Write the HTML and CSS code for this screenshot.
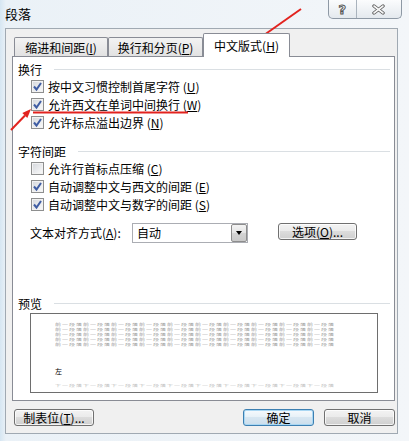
FILE: index.html
```html
<!DOCTYPE html>
<html lang="zh-CN">
<head>
  <meta charset="UTF-8" />
  <title>段落</title>
  <link rel="stylesheet" href="styles.css">
</head>
<body>

<div class="window">
  <div class="titlebar">
    <span class="title">段落</span>
    <div class="caption-btns">
      <span class="cap help">?</span>
      <span class="cap close">
        <svg width="13" height="11" viewBox="0 0 13 11">
          <path d="M2 2 L11 9 M11 2 L2 9" stroke="#5b5b5b" stroke-width="3.4" stroke-linecap="round" fill="none"/>
          <path d="M2 2 L11 9 M11 2 L2 9" stroke="#f7f7f7" stroke-width="1.6" stroke-linecap="round" fill="none"/>
        </svg>
      </span>
    </div>
  </div>

  <div class="client">
    <div class="tabs">
      <div class="tab t1">缩进和间距(<u>I</u>)</div>
      <div class="tab t2">换行和分页(<u>P</u>)</div>
      <div class="tab t3 active">中文版式(<u>H</u>)</div>
    </div>

    <div class="panel">
      <div class="group-title"><span>换行</span><i></i></div>
      <label class="check"><span class="cb"><svg width="11" height="11" viewBox="0 0 11 11"><path d="M2 5.5 L4.5 8.5 L9 2" stroke="#3f5da3" stroke-width="2" fill="none"/></svg></span>按中文习惯控制首尾字符 (<u>U</u>)</label>
      <label class="check"><span class="cb"><svg width="11" height="11" viewBox="0 0 11 11"><path d="M2 5.5 L4.5 8.5 L9 2" stroke="#3f5da3" stroke-width="2" fill="none"/></svg></span>允许西文在单词中间换行 (<u>W</u>)</label>
      <label class="check"><span class="cb"><svg width="11" height="11" viewBox="0 0 11 11"><path d="M2 5.5 L4.5 8.5 L9 2" stroke="#3f5da3" stroke-width="2" fill="none"/></svg></span>允许标点溢出边界 (<u>N</u>)</label>

      <div class="group-title chars"><span>字符间距</span><i></i></div>
      <label class="check"><span class="cb"></span>允许行首标点压缩 (<u>C</u>)</label>
      <label class="check"><span class="cb"><svg width="11" height="11" viewBox="0 0 11 11"><path d="M2 5.5 L4.5 8.5 L9 2" stroke="#3f5da3" stroke-width="2" fill="none"/></svg></span>自动调整中文与西文的间距 (<u>E</u>)</label>
      <label class="check"><span class="cb"><svg width="11" height="11" viewBox="0 0 11 11"><path d="M2 5.5 L4.5 8.5 L9 2" stroke="#3f5da3" stroke-width="2" fill="none"/></svg></span>自动调整中文与数字的间距 (<u>S</u>)</label>

      <div class="align-row">
        <span class="lbl">文本对齐方式(<u>A</u>):</span>
        <div class="select">
          <span class="val">自动</span>
          <span class="arrow"><b></b></span>
        </div>
        <span class="btn options">选项(<u>O</u>)...</span>
      </div>

      <div class="group-title preview-title"><span>预览</span><i></i></div>
      <div class="preview">
        <div class="pv-prev">前一段落前一段落前一段落前一段落前一段落前一段落前一段落前一段落前一段落前一段落<br>前一段落前一段落前一段落前一段落前一段落前一段落前一段落前一段落前一段落前一段落<br>前一段落前一段落前一段落前一段落前一段落前一段落前一段落前一段落前一段落前一段落<br>前一段落前一段落前一段落前一段落前一段落前一段落前一段落前一段落前一段落前一段落<br>前一段落前一段落前一段落前一段落前一段落前一段落前一段落前一段落前一段落前一段落</div>
        <div class="pv-cur">左</div>
        <div class="pv-next">下一段落下一段落下一段落下一段落下一段落下一段落下一段落下一段落下一段落下一段落</div>
      </div>
    </div>

    <div class="buttons">
      <span class="btn tabstop">制表位(<u>T</u>)...</span>
      <span class="btn ok">确定</span>
      <span class="btn cancel">取消</span>
    </div>
  </div>

  <!-- red annotation marks drawn over the dialog -->
  <svg class="marks" width="409" height="441" viewBox="0 0 409 441">
    <line x1="301" y1="9" x2="257" y2="40" stroke="#e2231f" stroke-width="2"/>
    <polygon points="250,45 260.5,42.5 255.9,35.9" fill="#e2231f"/>
    <line x1="11" y1="130" x2="25" y2="115.5" stroke="#e2231f" stroke-width="2"/>
    <polygon points="31,109 27.3,117.9 22.3,113.1" fill="#e2231f"/>
    <line x1="33" y1="112.5" x2="188" y2="112.5" stroke="#e2231f" stroke-width="2"/>
  </svg>
</div>

</body>
</html>
```

FILE: styles.css
```css
body {
  margin: 0;
  font-family: "Noto Sans CJK SC", "Noto Sans", sans-serif;
  font-size: 12px;
  color: #000;
}
u {
  text-decoration: underline;
}
.window {
  position: relative;
  width: 409px;
  height: 441px;
  overflow: hidden;
  background: linear-gradient(90deg, #d6e6f2 0, #eaf1f7 6px, #f3f6f9 100%);
}
.titlebar {
  height: 28px;
  display: flex;
  justify-content: space-between;
  align-items: flex-start;
}
.title {
  padding-left: 5px;
  line-height: 28px;
  font-size: 13px;
}
.caption-btns {
  display: flex;
  width: 74px;
  height: 19px;
  margin-right: 7px;
  box-sizing: border-box;
  border: 1px solid #8e99a5;
  border-top: 0;
  border-radius: 0 0 5px 5px;
  background: linear-gradient(#fbfcfd, #e4e9ee);
}
.cap {
  display: flex;
  align-items: center;
  justify-content: center;
  height: 18px;
}
.cap.help {
  width: 27px;
  border-right: 1px solid #a9b3bd;
  font: bold 13px "DejaVu Sans", sans-serif;
  color: #f7f7f7;
  -webkit-text-stroke: 1px #555;
}
.cap.close {
  width: 45px;
}
.client {
  margin-left: 5px;
  width: 393px;
  height: 406px;
  box-sizing: border-box;
  border: 1px solid #a0a9b2;
  background: #f0f0f0;
  padding: 4px 2px 0 6px;
}
.tabs {
  display: flex;
  align-items: flex-end;
  height: 23px;
  margin-left: 2px;
}
.tab {
  height: 19px;
  box-sizing: border-box;
  border: 1px solid #898c95;
  border-bottom: 0;
  border-radius: 2px 2px 0 0;
  background: linear-gradient(#f3f3f3, #e2e2e2);
  display: flex;
  align-items: center;
  justify-content: center;
}
.t1 { width: 94px; }
.t2 { width: 95px; }
.t3 { width: 87px; }
.tab.active {
  position: relative;
  z-index: 1;
  height: 24px;
  margin-bottom: -1px;
  background: #fff;
}
.panel {
  width: 383px;
  height: 345px;
  box-sizing: border-box;
  border: 1px solid #898c95;
  background: #fff;
  padding: 4px 4px 0 5px;
}
.group-title {
  display: flex;
  align-items: center;
  height: 16px;
}
.group-title i {
  flex: 1;
  border-top: 1px solid #dadfe3;
  margin-left: 12px;
}
.group-title.chars {
  margin-top: 12px;
}
.check {
  display: flex;
  align-items: center;
  height: 18px;
  padding-left: 13px;
}
.cb {
  width: 13px;
  height: 13px;
  box-sizing: border-box;
  margin-right: 4px;
  border: 1px solid #8e8f8f;
  background: linear-gradient(135deg, #d4d7dc, #fbfbfb);
  box-shadow: inset 0 0 0 1px #f2f2f2;
  display: flex;
  align-items: center;
  justify-content: center;
}
.align-row {
  display: flex;
  align-items: flex-start;
  height: 20px;
  margin-top: 10px;
  padding-left: 12px;
}
.align-row .lbl {
  width: 102px;
  line-height: 20px;
}
.select {
  display: flex;
  width: 116px;
  height: 20px;
  box-sizing: border-box;
  border: 1px solid #abadb3;
  background: #fff;
}
.select .val {
  flex: 1;
  padding-left: 4px;
  line-height: 18px;
}
.select .arrow {
  width: 16px;
  height: 18px;
  box-sizing: border-box;
  border: 1px solid #8d8d8d;
  border-radius: 2px;
  background: linear-gradient(#f4f4f4, #e4e4e4 50%, #d4d4d4 50%, #c9c9c9);
  display: flex;
  align-items: center;
  justify-content: center;
}
.select .arrow b {
  border-left: 3.5px solid transparent;
  border-right: 3.5px solid transparent;
  border-top: 4px solid #000;
}
.btn {
  height: 17px;
  box-sizing: border-box;
  border: 1px solid #707070;
  border-radius: 3px;
  background: linear-gradient(#f3f3f3, #ebebeb 45%, #dcdcdc 50%, #cfcfcf);
  box-shadow: inset 0 0 0 1px rgba(255, 255, 255, 0.75);
  display: flex;
  align-items: center;
  justify-content: center;
  white-space: nowrap;
}
.btn.options {
  width: 79px;
  margin-left: 30px;
}
.preview-title {
  margin-top: 52px;
}
.preview {
  width: 348px;
  height: 80px;
  box-sizing: border-box;
  margin: 2px 0 0 12px;
  border: 1px solid #6e6e6e;
  background: #fff;
  padding: 8px 0 0 24px;
}
/* sample lines are squashed to 5px rows like the Word preview */
.pv-prev,
.pv-next {
  font-size: 6px;
  line-height: 9px;
  letter-spacing: 1px;
  color: #9a9a9a;
  white-space: nowrap;
  transform: scaleY(0.5556);
  transform-origin: 0 0;
}
.pv-prev {
  margin-bottom: -20px;
}
.pv-cur {
  font-size: 7px;
  line-height: 8px;
  margin-top: 20px;
}
.pv-next {
  margin-top: 8px;
  color: #bdbdbd;
}
.buttons {
  display: flex;
  margin: 8px 0 0 2px;
}
.btn.tabstop {
  width: 80px;
}
.btn.ok {
  width: 71px;
  margin-left: auto;
  border-color: #3c7fb1;
  background: linear-gradient(#f6fafd, #e6f0f7 50%, #d7e6f1 50%, #cbdeec);
  box-shadow: inset 0 0 0 1px #a9d7f3;
}
.btn.cancel {
  width: 71px;
  margin-left: 10px;
}
.marks {
  position: absolute;
  top: 0;
  left: 0;
  pointer-events: none;
}
```
